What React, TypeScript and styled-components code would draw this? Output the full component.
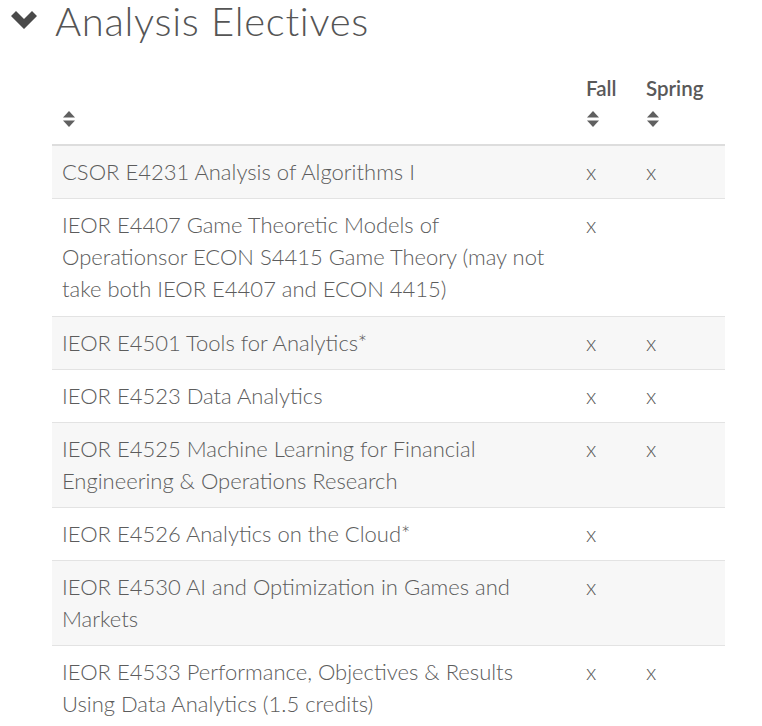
import React from "react";
import styled, { createGlobalStyle } from "styled-components";

const GlobalStyle = createGlobalStyle`
  body {
    margin: 0;
    background: #fff;
    font-family: Lato, "Open Sans", Arial, sans-serif;
    color: #555;
  }
  * {
    box-sizing: border-box;
  }
`;

const Page = styled.div`
  width: 762px;
  height: 726px;
  overflow: hidden;
`;

const Heading = styled.div`
  display: flex;
  align-items: center;
  gap: 16px;
  padding-left: 9px;
  height: 42px;
`;

const HeadingTitle = styled.h2`
  margin: 0;
  font-size: 40px;
  font-weight: 300;
  line-height: 42px;
  color: #555;
  letter-spacing: 0.7px;
`;

const Table = styled.table`
  margin: 33px 0 0 52px;
  width: 673px;
  border-collapse: collapse;
  table-layout: fixed;
  font-size: 22px;
  color: #5c5c5c;
`;

const HeadCell = styled.th<{ $width?: number }>`
  width: ${(p) => (p.$width ? `${p.$width}px` : "auto")};
  text-align: left;
  vertical-align: bottom;
  padding: 0 10px 19px;
  font-weight: 600;
  font-size: 20.5px;
  line-height: 26px;
  color: #595959;
  border-bottom: 2px solid #ddd;
`;

const Row = styled.tr<{ $striped: boolean }>`
  background: ${(p) => (p.$striped ? "#f7f7f7" : "#fff")};
  border-bottom: 1px solid #e3e3e3;
`;

const Cell = styled.td<{ $wide?: boolean }>`
  padding: 10px ${(p) => (p.$wide ? "22px" : "10px")} 10px 10px;
  line-height: 32px;
  vertical-align: top;
  font-weight: 300;
`;

const MultiCell = styled(Cell)`
  padding-bottom: 11px;
`;

const SortWrap = styled.span`
  display: block;
  height: 18px;
  margin-top: 6px;
`;

const Chevron = () => (
  <svg width="30" height="22" viewBox="0 0 30 22">
    <path d="M2 6 L7 1 L15 9 L23 1 L28 6 L15 19 Z" fill="#4a4a4a" />
  </svg>
);

const SortIcon = () => (
  <SortWrap>
    <svg width="14" height="18" viewBox="0 0 14 18">
      <path d="M7 1 L13 7.5 L1 7.5 Z" fill="#606060" />
      <path d="M1 10.5 L13 10.5 L7 17 Z" fill="#606060" />
    </svg>
  </SortWrap>
);

interface Course {
  name: string;
  fall: boolean;
  spring: boolean;
  long?: boolean;
}

const courses: Course[] = [
  { name: "CSOR E4231 Analysis of Algorithms I", fall: true, spring: true },
  {
    name: "IEOR E4407 Game Theoretic Models of Operationsor ECON S4415 Game Theory (may not take both IEOR E4407 and ECON 4415)",
    fall: true,
    spring: false,
    long: true,
  },
  { name: "IEOR E4501 Tools for Analytics*", fall: true, spring: true },
  { name: "IEOR E4523 Data Analytics", fall: true, spring: true },
  {
    name: "IEOR E4525 Machine Learning for Financial Engineering & Operations Research",
    fall: true,
    spring: true,
  },
  { name: "IEOR E4526 Analytics on the Cloud*", fall: true, spring: false },
  {
    name: "IEOR E4530 AI and Optimization in Games and Markets",
    fall: true,
    spring: false,
  },
  {
    name: "IEOR E4533 Performance, Objectives & Results Using Data Analytics (1.5 credits)",
    fall: true,
    spring: true,
  },
];

export default function App() {
  return (
    <Page>
      <GlobalStyle />
      <Heading>
        <Chevron />
        <HeadingTitle>Analysis Electives</HeadingTitle>
      </Heading>
      <Table>
        <thead>
          <tr>
            <HeadCell>
              <SortIcon />
            </HeadCell>
            <HeadCell $width={60}>
              Fall
              <SortIcon />
            </HeadCell>
            <HeadCell $width={89}>
              Spring
              <SortIcon />
            </HeadCell>
          </tr>
        </thead>
        <tbody>
          {courses.map((c, i) => (
            <Row key={c.name} $striped={i % 2 === 0}>
              {c.long ? (
                <MultiCell $wide>{c.name}</MultiCell>
              ) : (
                <Cell $wide>{c.name}</Cell>
              )}
              <Cell>{c.fall ? "x" : ""}</Cell>
              <Cell>{c.spring ? "x" : ""}</Cell>
            </Row>
          ))}
        </tbody>
      </Table>
    </Page>
  );
}
